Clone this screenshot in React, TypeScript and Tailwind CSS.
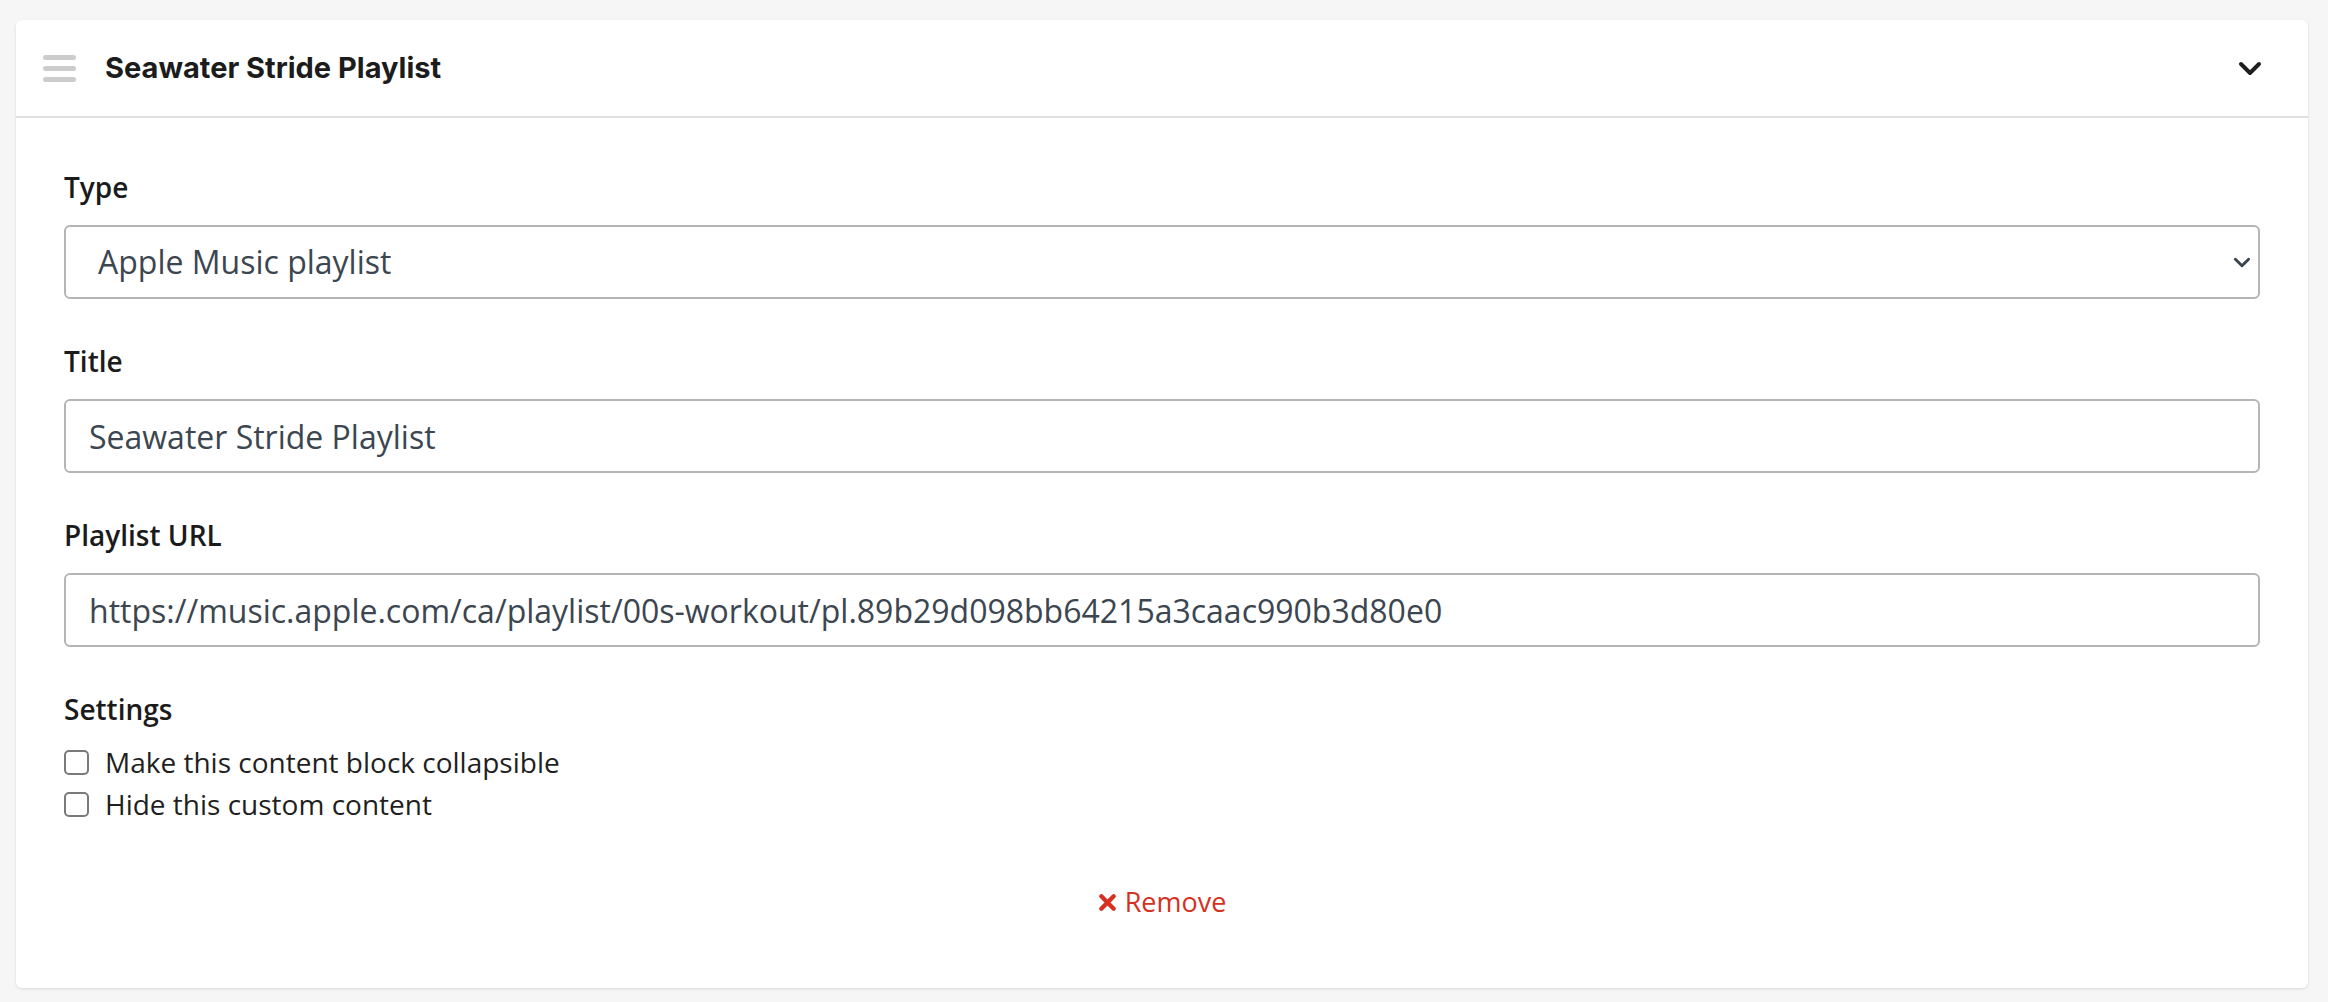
import { useState } from 'react'

const labelCls = "block text-[28px] leading-[38px] font-semibold text-[#1b1b1b] mb-[19px]"
const fieldCls =
    "w-full h-[74px] rounded-[6px] border-2 border-[#b5b5b5] bg-white text-[32px] text-[#3c4650] outline-none"

function Chevron({ className, stroke }: { className: string; stroke: string }) {
    return (
        <svg viewBox="0 0 24 15" className={className} fill="none">
            <polyline points="3,3 12,12 21,3" stroke={stroke} strokeWidth="4" strokeLinecap="round" strokeLinejoin="round" />
        </svg>
    )
}

export default function App() {
    const [type, setType] = useState('apple')
    const [title, setTitle] = useState('Seawater Stride Playlist')
    const [url, setUrl] = useState('https://music.apple.com/ca/playlist/00s-workout/pl.89b29d098bb64215a3caac990b3d80e0')
    const [collapsible, setCollapsible] = useState(false)
    const [hidden, setHidden] = useState(false)

    return (
        <div className="min-h-screen bg-[#f6f6f6] pl-[16px] pr-[20px] pt-[20px] pb-[14px] font-['Open_Sans',sans-serif]">
            <div className="bg-white rounded-[6px] shadow-[0_1px_3px_rgba(0,0,0,0.12)]">
                {/* Header */}
                <div className="h-[98px] flex items-center border-b-2 border-[#e0e0e0] pl-[27px] pr-[46px]">
                    <div className="flex flex-col gap-[6px] w-[33px]">
                        <span className="h-[5px] rounded-full bg-[#cccccc]" />
                        <span className="h-[5px] rounded-full bg-[#cccccc]" />
                        <span className="h-[5px] rounded-full bg-[#cccccc]" />
                    </div>
                    <h2 className="ml-[29px] text-[29px] font-bold text-[#1c1c1c] font-['Inter',sans-serif]">
                        {title}
                    </h2>
                    <button className="ml-auto">
                        <Chevron className="w-[24px] h-[15px]" stroke="#1f1f1f" />
                    </button>
                </div>

                {/* Body */}
                <div className="px-[48px] pt-[50px] pb-[66px]">
                    <div className="flex flex-col gap-[43px]">
                        <div>
                            <label className={labelCls}>Type</label>
                            <div className="relative">
                                <select
                                    value={type}
                                    onChange={e => setType(e.target.value)}
                                    className={`${fieldCls} appearance-none pl-[32px] pr-[60px]`}
                                >
                                    <option value="apple">Apple Music playlist</option>
                                    <option value="spotify">Spotify playlist</option>
                                </select>
                                <Chevron className="absolute right-[9px] top-[32px] w-[18px] h-[11px] pointer-events-none" stroke="#3c4650" />
                            </div>
                        </div>

                        <div>
                            <label className={labelCls}>Title</label>
                            <input value={title} onChange={e => setTitle(e.target.value)} className={`${fieldCls} px-[23px]`} />
                        </div>

                        <div>
                            <label className={labelCls}>Playlist URL</label>
                            <input value={url} onChange={e => setUrl(e.target.value)} className={`${fieldCls} px-[23px]`} />
                        </div>

                        <div>
                            <div className="text-[28px] leading-[38px] font-semibold text-[#1b1b1b] mb-[13px]">Settings</div>
                            <label className="flex items-center h-[42px] text-[28px] text-[#1f1f1f] cursor-pointer">
                                <input
                                    type="checkbox"
                                    checked={collapsible}
                                    onChange={e => setCollapsible(e.target.checked)}
                                    className="appearance-none w-[25px] h-[25px] rounded-[5px] border-2 border-[#7a7a7a] bg-white mr-[16px] checked:bg-[#3c4650]"
                                />
                                Make this content block collapsible
                            </label>
                            <label className="flex items-center h-[42px] text-[28px] text-[#1f1f1f] cursor-pointer">
                                <input
                                    type="checkbox"
                                    checked={hidden}
                                    onChange={e => setHidden(e.target.checked)}
                                    className="appearance-none w-[25px] h-[25px] rounded-[5px] border-2 border-[#7a7a7a] bg-white mr-[16px] checked:bg-[#3c4650]"
                                />
                                Hide this custom content
                            </label>
                        </div>
                    </div>

                    {/* Remove */}
                    <div className="mt-[57px] flex justify-center">
                        <button className="flex items-center gap-[8px] h-[40px] text-[27px] text-[#d6301f]">
                            <svg viewBox="0 0 20 20" className="w-[19px] h-[19px]">
                                <path d="M3.5 3.5 L16.5 16.5 M16.5 3.5 L3.5 16.5" stroke="#d6301f" strokeWidth="4.6" strokeLinecap="round" />
                            </svg>
                            Remove
                        </button>
                    </div>
                </div>
            </div>
        </div>
    )
}
